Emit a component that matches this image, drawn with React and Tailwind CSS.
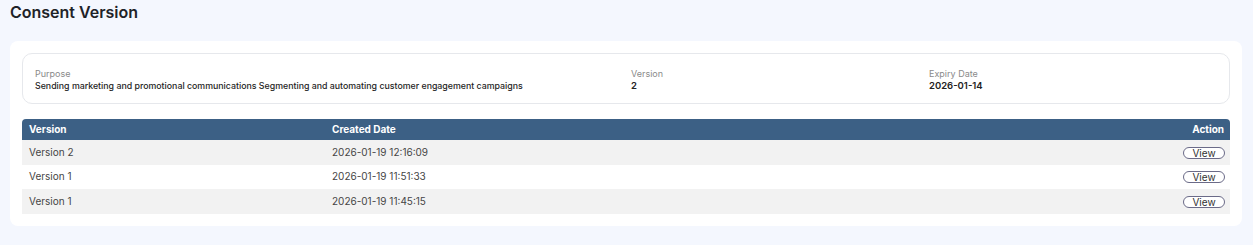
import React from "react";

const rows = [
  { v: "Version 2", d: "2026-01-19 12:16:09" },
  { v: "Version 1", d: "2026-01-19 11:51:33" },
  { v: "Version 1", d: "2026-01-19 11:45:15" },
];

export default function App() {
  return (
    <div className="min-h-[245px] w-full bg-[#f4f7fe] px-[10px] font-['Inter',sans-serif]">
      <h1 className="h-[24px] text-[16px] leading-[24px] font-semibold text-[#1f2328]">Consent Version</h1>
      <div className="mt-[17px] mr-[1px] rounded-[8px] bg-white p-[12px]">
        <div className="grid grid-cols-[596px_298px_1fr] rounded-[10px] border border-[#e6e8ec] px-[12px] pt-[14px] pb-[11px]">
          <div>
            <div className="text-[9px] leading-[12px] text-[#8a8a8a]">Purpose</div>
            <div className="text-[8.8px] leading-[12px] font-medium text-[#1e1e1e]">
              Sending marketing and promotional communications Segmenting and automating customer engagement campaigns
            </div>
          </div>
          <div>
            <div className="text-[9px] leading-[12px] text-[#8a8a8a]">Version</div>
            <div className="text-[9.5px] leading-[12px] font-semibold text-[#222]">2</div>
          </div>
          <div>
            <div className="text-[9px] leading-[12px] text-[#8a8a8a]">Expiry Date</div>
            <div className="text-[9.5px] leading-[12px] font-semibold text-[#222]">2026-01-14</div>
          </div>
        </div>
        <div className="mt-[15px]">
          <div className="flex h-[21px] items-center rounded-t-[4px] bg-[#3c6085] pl-[7px] pr-[6px] text-[10px] font-bold text-white">
            <div className="w-[303px]">Version</div>
            <div className="flex-1">Created Date</div>
            <div>Action</div>
          </div>
          {rows.map((r, i) => (
            <div
              key={i}
              className={`flex h-[24.5px] items-center pl-[7px] pr-[5px] text-[10px] text-[#454545] ${i % 2 === 0 ? "bg-[#f2f2f2]" : "bg-white"}`}
            >
              <div className="w-[303px]">{r.v}</div>
              <div className="flex-1">{r.d}</div>
              <button className="mt-[1px] flex h-[12px] w-[42px] items-center justify-center rounded-full border border-[#6b6b88] bg-white text-[10px] leading-[10px] text-[#333]">
                View
              </button>
            </div>
          ))}
        </div>
      </div>
    </div>
  );
}
